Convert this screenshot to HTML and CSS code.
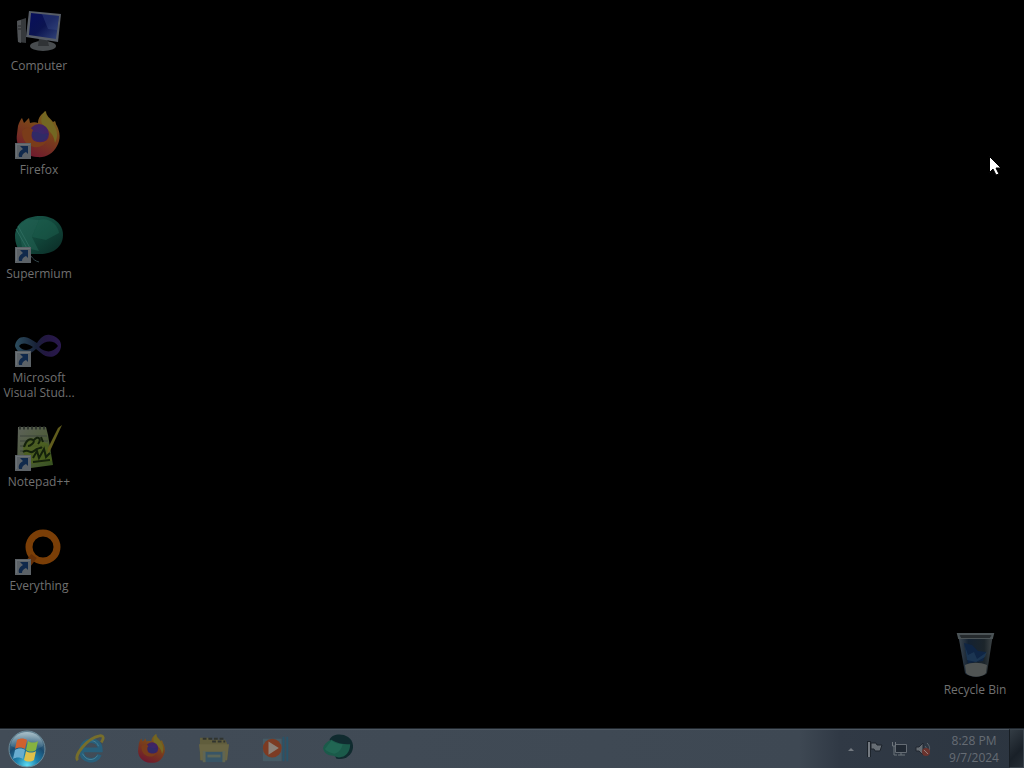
FILE: index.html
```html
<!DOCTYPE html>
<html lang="en">
<head>
<meta charset="utf-8">
<title>Desktop</title>
<link rel="stylesheet" href="styles.css">
</head>
<body>
<svg class="defs" aria-hidden="true">
  <defs>
    <linearGradient id="screen" x1="0" y1="0" x2="1" y2="1"><stop offset="0" stop-color="#070e5c"/><stop offset=".5" stop-color="#0b1450"/><stop offset="1" stop-color="#34467a"/></linearGradient>
    <linearGradient id="fox" x1=".8" y1="0" x2=".3" y2="1"><stop offset="0" stop-color="#786c20"/><stop offset=".45" stop-color="#7a401a"/><stop offset="1" stop-color="#6e172f"/></linearGradient>
    <radialGradient id="purple"><stop offset="0" stop-color="#35296b"/><stop offset="1" stop-color="#43215f"/></radialGradient>
    <linearGradient id="teal" x1="0" y1="0" x2="1" y2="1"><stop offset="0" stop-color="#1b594d"/><stop offset=".55" stop-color="#114539"/><stop offset="1" stop-color="#0a2924"/></linearGradient>
    <linearGradient id="vs" x1="0" y1="0" x2="1" y2="0"><stop offset="0" stop-color="#2c4d5e"/><stop offset=".45" stop-color="#182238"/><stop offset=".65" stop-color="#221740"/><stop offset="1" stop-color="#29194d"/></linearGradient>
    <linearGradient id="paper" x1="0" y1="0" x2="1" y2="1"><stop offset="0" stop-color="#5d625a"/><stop offset=".5" stop-color="#4f5c3c"/><stop offset="1" stop-color="#36521c"/></linearGradient>
    <linearGradient id="glass" x1="0" y1="0" x2="1" y2="0"><stop offset="0" stop-color="#3f4951"/><stop offset=".3" stop-color="#142232"/><stop offset=".75" stop-color="#1c252b"/><stop offset="1" stop-color="#404648"/></linearGradient>
    <radialGradient id="orb" cx=".5" cy=".95" r=".85"><stop offset="0" stop-color="#5ddcf2"/><stop offset=".35" stop-color="#1d82ad"/><stop offset=".7" stop-color="#1b4c70"/><stop offset="1" stop-color="#567487"/></radialGradient>
    <linearGradient id="orb-shine" x1="0" y1="0" x2="0" y2="1"><stop offset="0" stop-color="#c3d8df" stop-opacity=".75"/><stop offset="1" stop-color="#7ca7b8" stop-opacity=".1"/></linearGradient>
    <symbol id="shortcut" viewBox="0 0 16 16"><path fill="#5c6267" d="M0 0h16v16H0z"/><path fill="#6c7276" d="M1 1h14v1H2v12H1z"/><path fill="#10294b" d="M5 3h8v8l-2-2c-3 1-4 3-4 5H4c-1-4 1-6 4-8z"/></symbol>
    <symbol id="firefox" viewBox="0 0 48 48">
      <path fill="url(#fox)" d="M3 15C4 11 6 8 7 7l2 5c2-2 3-3 5-5l1 5c3-1 6-1 8 0 0-5 3-9 8-12 0 5 4 7 7 11l2-1c1 2 1 4 2 5 3 6 4 13 0 20-4 8-12 12-20 11C8 45 0 35 2 23z"/>
      <path fill="#736722" d="M30 0c0 5 4 7 7 11 5 7 7 13 3 21-1-8-5-12-10-15-5-4-5-11 0-17z"/>
      <circle cx="24" cy="23" r="10" fill="url(#purple)"/>
      <path fill="#7a3c1a" d="M7 20c4-4 8-4 11-1-2 4-2 7 0 10 4 3 10 3 14 0-2 6-10 9-16 6C10 33 7 27 7 20z"/>
      <path fill="#302a66" d="M17 21h5c3 2 6 3 11 1 0 5-4 8-8 8-5 0-8-4-8-9z"/>
    </symbol>
  </defs>
</svg>

<main class="desktop">
  <button class="shortcut" type="button">
    <svg class="shortcut-icon" viewBox="0 0 48 48" aria-hidden="true">
      <path fill="#36393c" d="M2 14l9-3v25l-8-1z"/><path fill="#505356" d="M2 14l4-1v23l-3-1z"/><path stroke="#252729" d="M3 19h3M3 22h3"/>
      <ellipse cx="28" cy="39" rx="13" ry="5" fill="#484c4f"/><path fill="#303336" d="M24 31h8l2 8H23z"/>
      <path fill="#565c66" d="M14 4l32 3-3 28-32-5z"/><path fill="url(#screen)" d="M16 6l28 3-3 23-27-4z"/><path fill="#40538c" fill-opacity=".35" d="M27 7l17 2-2 14-9-1z"/>
    </svg>
    <span class="shortcut-label">Computer</span>
  </button>
  <button class="shortcut" type="button">
    <svg class="shortcut-icon" viewBox="0 0 48 48" aria-hidden="true"><use href="#firefox" width="48" height="48"/><use href="#shortcut" y="32" width="16" height="16"/></svg>
    <span class="shortcut-label">Firefox</span>
  </button>
  <button class="shortcut" type="button">
    <svg class="shortcut-icon" viewBox="0 0 48 48" aria-hidden="true">
      <path fill="url(#teal)" d="M0 20C1 7 13 1 25 1c14 0 23 8 23 19 0 12-10 19-23 19H10C3 36 0 30 0 20z"/>
      <path fill="#246556" fill-opacity=".5" d="M3 11l9-7 12 1-7 17 7 14-17-4z"/><path fill="#206854" fill-opacity=".4" d="M24 5c10-3 19 5 20 13L31 25l-14-3z"/>
      <path fill="none" stroke="#2c6a5d" d="M1 14l12 21M3 11l12 22"/><path fill="none" stroke="#32454b" d="M16 41c2 3 4 5 8 6"/>
      <use href="#shortcut" y="32" width="16" height="16"/>
    </svg>
    <span class="shortcut-label">Supermium</span>
  </button>
  <button class="shortcut" type="button">
    <svg class="shortcut-icon" viewBox="0 0 48 48" aria-hidden="true">
      <path fill="url(#vs)" fill-rule="evenodd" d="M0 27c1-9 9-12 17-6l5 3c4-6 8-9 13-8 7 1 12 6 11 12-2 10-12 13-20 6l-5-4c-6 7-18 7-21-3zm4 0c3 5 10 5 14 1-6-4-11-5-14-1zm20 1c6 6 14 6 19-1-4-6-13-6-19 1z"/>
      <use href="#shortcut" y="32" width="16" height="16"/>
    </svg>
    <span class="shortcut-label">Microsoft<br>Visual Stud...</span>
  </button>
  <button class="shortcut" type="button">
    <svg class="shortcut-icon" viewBox="0 0 48 48" aria-hidden="true">
      <path fill="url(#paper)" d="M3 4h28l2 8 5 30-22 3H2z"/><path stroke="#303630" stroke-dasharray="2 2" stroke-width="3" d="M4 5h27"/>
      <path stroke="#3a423a" d="M5 13h27M5 18h28M5 23h29M5 28h30"/>
      <path fill="#4b6118" fill-opacity=".7" d="M8 23l8-8 8 2 9 4 4 17-20 3-8-8z"/>
      <path fill="none" stroke="#13200b" stroke-width="2" d="M9 24c2-7 6-9 9-7s-3 6-5 6m6-6c4-5 8-1 4 4m3-7l2 5M8 29c6-4 7 3 11-1s6-2 8-4M18 35l4-7 2 7 5-9 2 8 4-4M18 39l17-2"/>
      <path fill="#605c1c" d="M43 5l4-3-12 26-3 3 1-6z"/>
      <use href="#shortcut" y="32" width="16" height="16"/>
    </svg>
    <span class="shortcut-label">Notepad++</span>
  </button>
  <button class="shortcut" type="button">
    <svg class="shortcut-icon" viewBox="0 0 48 48" aria-hidden="true">
      <circle cx="28" cy="20" r="14" fill="none" stroke="#7a3e07" stroke-width="7"/><path stroke="#653008" stroke-width="7" d="M19 29l-6 8"/>
      <use href="#shortcut" y="32" width="16" height="16"/>
    </svg>
    <span class="shortcut-label">Everything</span>
  </button>
  <button class="shortcut recycle-bin" type="button">
    <svg class="shortcut-icon" viewBox="0 0 48 48" aria-hidden="true">
      <path fill="url(#glass)" d="M7 3h35l-6 39c-4 5-18 5-22 0z"/><path fill="#0f2544" d="M13 12l8 2 6 6 8 1-3 9-15 2z"/><path fill="#27465f" fill-opacity=".5" d="M14 15l3 9 6-3 3 7 10-7-2 5-9 5-9-2z"/>
      <path fill="#505453" d="M14 34c6-3 15-3 22 0l-1 8c-4 5-16 5-20 0z"/><path fill="none" stroke="#4b5356" stroke-width="2" d="M7 3h35l-1 4H8z"/><path fill="#252a2d" d="M9 4h31l-1 3H10z"/>
    </svg>
    <span class="shortcut-label">Recycle Bin</span>
  </button>
</main>

<footer class="taskbar">
  <button class="start" type="button" aria-label="Start">
    <svg class="start-icon" viewBox="0 0 40 40" aria-hidden="true">
      <circle cx="20" cy="20" r="18" fill="url(#orb)" stroke="#6b8a98"/><path fill="url(#orb-shine)" d="M4 17a16 14 0 0 1 32 0c-8 6-22 5-32 0z"/>
      <path fill="#d0602e" d="M10 11c3-2 7-2 10 0l-2 9c-3-2-7-2-10 0z"/><path fill="#86b240" d="M21 12c3 2 7 2 10 0l-2 9c-3 2-7 2-10 0z"/>
      <path fill="#68add0" d="M8 21c3-2 7-2 10 0l-2 9c-3-2-7-2-10 0z"/><path fill="#dfc04a" d="M19 22c3 2 7 2 10 0l-2 9c-3 2-7 2-10 0z"/>
    </svg>
  </button>
  <nav class="apps" aria-label="Taskbar">
    <button class="app" type="button" aria-label="Internet Explorer">
      <svg class="app-icon" viewBox="0 0 32 32" aria-hidden="true"><path fill="none" stroke="#285f7a" stroke-width="5" d="M7 17h20c0-14-20-13-20 1 0 12 16 13 19 4"/><path fill="none" stroke="#498199" d="M8 15c2-9 14-11 17-2M8 21c4 8 12 8 16 2"/><path fill="none" stroke="#776e2b" stroke-width="3" d="M3 28C-2 23 14 4 26 2c5-1 5 3 2 7"/></svg>
    </button>
    <button class="app" type="button" aria-label="Firefox"><svg class="app-icon" viewBox="0 0 48 48" aria-hidden="true"><use href="#firefox" width="48" height="48"/></svg></button>
    <button class="app" type="button" aria-label="File Explorer">
      <svg class="app-icon" viewBox="0 0 32 32" aria-hidden="true"><path fill="#605d3c" d="M1 4h9l2 2h16l2 4v18H1z"/><path stroke="#30342f" stroke-width="2" stroke-dasharray="4 2" d="M4 5h22M14 8h14"/><path fill="#696543" d="M0 11h32l-2 17H2z"/><path fill="#385566" d="M6 19h20v11H6z"/><path fill="#5b6557" d="M9 22h14v3H9z"/><path fill="#606552" d="M4 18h3v12H4zm21 0h3v12h-3z"/></svg>
    </button>
    <button class="app" type="button" aria-label="Windows Media Player">
      <svg class="app-icon" viewBox="0 0 32 32" aria-hidden="true"><path fill="#465a64" d="M2 5h20v24H2z"/><path stroke="#28546a" stroke-width="2" d="M24 3v26M28 3v26"/><circle cx="12" cy="15" r="10" fill="#7c3b23"/><path fill="#898078" d="M8 8l11 7-11 7z"/></svg>
    </button>
    <button class="app" type="button" aria-label="Supermium">
      <svg class="app-icon" viewBox="0 0 32 32" aria-hidden="true"><path fill="#102b2f" d="M7 6C10-2 30-2 32 12c1 10-9 17-18 14z"/><path fill="#1b5a4a" d="M0 15c1-4 4-7 9-9 5 3 11 5 20 5 0 8-5 14-12 14-3 0-5-2-8-2-4 0-8-3-9-8z"/><path fill="#28715b" fill-opacity=".5" d="M9 7c4 3 8 4 12 4-1 5-4 9-9 10-4-1-8-2-10-5z"/></svg>
    </button>
  </nav>
  <aside class="tray">
    <button class="tray-button" type="button" aria-label="Show hidden icons"><svg class="tray-icon" viewBox="0 0 16 16" aria-hidden="true"><path fill="#737980" d="M5 10l3-3 3 3z"/></svg></button>
    <button class="tray-button" type="button" aria-label="Action Center"><svg class="tray-icon" viewBox="0 0 16 16" aria-hidden="true"><path stroke="#1c232b" stroke-width="4" d="M2 0v16"/><path stroke="#747a81" stroke-width="2" d="M2 1v15"/><path fill="#666d74" stroke="#1c232b" d="M4 2h5l1 2h5l-2 6H8L7 8H4z"/></svg></button>
    <button class="tray-button" type="button" aria-label="Network"><svg class="tray-icon" viewBox="0 0 16 16" aria-hidden="true"><path fill="#202832" stroke="#656c74" d="M4.500 3.500h11v8h-11z"/><path fill="none" stroke="#6d747b" d="M1.500 1v4h3V1M3 5v9h3m1 0h7m-4-2v2"/></svg></button>
    <button class="tray-button" type="button" aria-label="Volume muted"><svg class="tray-icon" viewBox="0 0 16 16" aria-hidden="true"><path fill="#666c72" stroke="#202730" d="M1 6h3l4-4v12l-4-4H1z"/><path fill="none" stroke="#606870" d="M10 5c2 2 2 5 0 7m2-10c3 3 3 6 2 8"/><circle cx="11" cy="11" r="4" fill="#6a332e"/><path stroke="#96807c" d="M9 9l4 4"/></svg></button>
    <button class="clock" type="button"><time datetime="2024-09-07T20:28">8:28 PM<br>9/7/2024</time></button>
  </aside>
  <button class="show-desktop" type="button" aria-label="Show desktop"></button>
</footer>

<svg class="pointer" viewBox="0 0 12 20" aria-hidden="true"><path fill="#fff" stroke="#000" d="M.5.500v16L4 13l3 6 3-1-3-6h5z"/></svg>
</body>
</html>
```

FILE: styles.css
```css
* { box-sizing: border-box; }

body {
  display: grid;
  grid-template-rows: 1fr 40px;
  height: 100vh;
  margin: 0;
  overflow: hidden;
  background: #000;
  color: #707070;
  font: 12px/15px "Open Sans", "Noto Sans", sans-serif;
}

button {
  padding: 0;
  border: 0;
  background: none;
  color: inherit;
  font: inherit;
}

svg { display: block; }

.defs {
  position: absolute;
  width: 0;
  height: 0;
}

.desktop {
  display: grid;
  grid-template-columns: 76px 1fr 76px;
  grid-template-rows: repeat(7, 104px);
  min-height: 0;
  padding: 0 11px 0 1px;
}

.shortcut {
  display: flex;
  flex-direction: column;
  align-items: center;
  gap: 3px;
  grid-column: 1;
  padding-top: 7px;
}

.recycle-bin {
  grid-column: 3;
  grid-row: 7;
}

.shortcut-icon {
  width: 48px;
  height: 48px;
}

.shortcut-label { white-space: nowrap; }

.taskbar {
  display: flex;
  align-items: stretch;
  border-top: 1px solid #20272e;
  background: linear-gradient(90deg, #424c57 0, #3e4853 78%, #303945 82%, #2c3540);
  box-shadow: inset 0 1px #4d5761;
}

.start { width: 54px; }

.start-icon {
  width: 40px;
  height: 40px;
  margin-left: 7px;
}

.apps {
  display: flex;
  flex: 1;
  padding-left: 5px;
}

.app {
  display: grid;
  place-items: center;
  width: 62px;
}

.app-icon {
  width: 30px;
  height: 30px;
}

.tray {
  display: flex;
  align-items: center;
}

.tray-button {
  display: grid;
  place-items: center;
  width: 24px;
  height: 24px;
}

.tray-icon {
  width: 16px;
  height: 16px;
}

.clock {
  width: 74px;
  padding-left: 4px;
  color: #666c74;
  line-height: 17px;
}

.show-desktop {
  width: 15px;
  border: 1px solid #3c454d;
  border-left-color: #171d23;
  background: linear-gradient(135deg, #333c44, #192028 60%, #252d35);
}

.pointer {
  position: absolute;
  top: 156px;
  left: 989px;
  width: 12px;
  height: 20px;
}
```
